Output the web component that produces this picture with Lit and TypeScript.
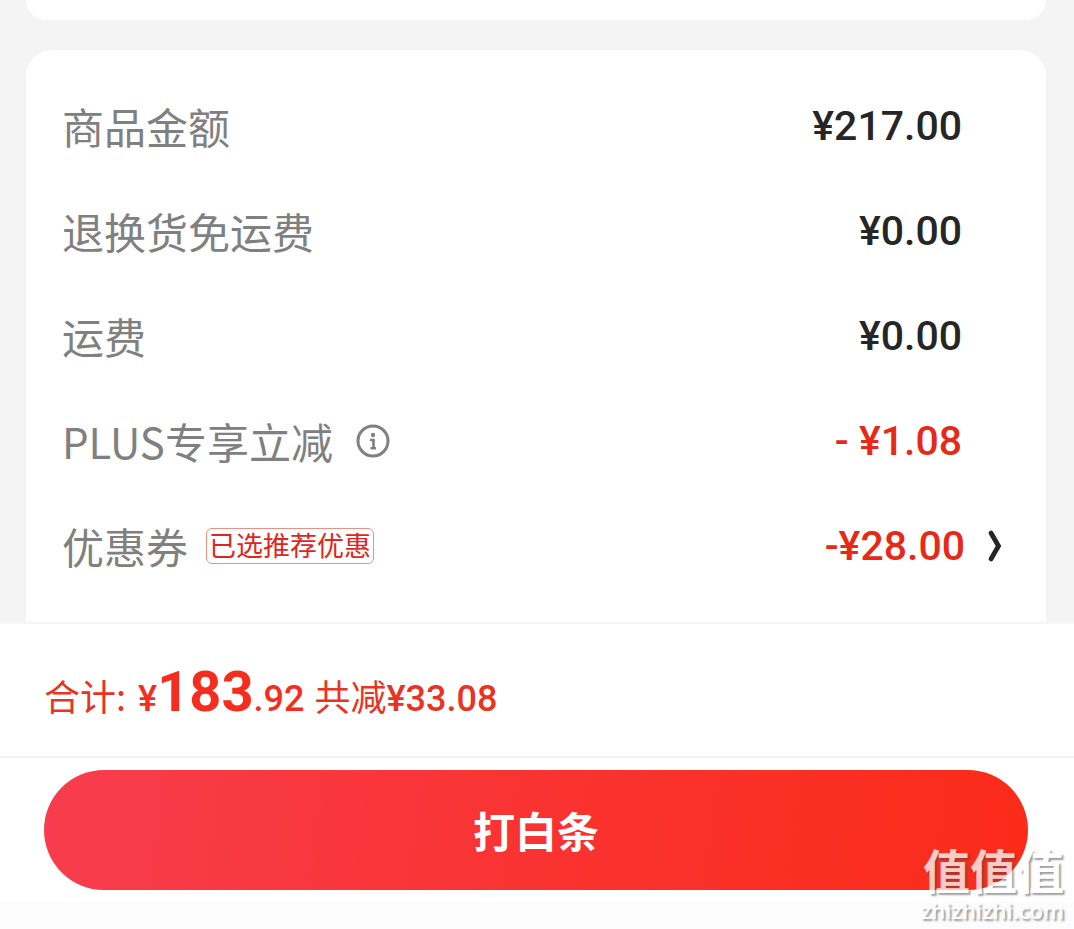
import { LitElement, html, css, nothing } from "lit";
import { customElement, property } from "lit/decorators.js";

interface FeeLine {
  label: string;
  value: string;
  discount?: boolean;
  info?: boolean;
  tag?: string;
  more?: boolean;
}

const LINES: FeeLine[] = [
  { label: "商品金额", value: "¥217.00" },
  { label: "退换货免运费", value: "¥0.00" },
  { label: "运费", value: "¥0.00" },
  { label: "PLUS专享立减", value: "- ¥1.08", discount: true, info: true },
  { label: "优惠券", value: "-¥28.00", discount: true, tag: "已选推荐优惠", more: true },
];

@customElement("fee-row")
export class FeeRow extends LitElement {
  @property({ attribute: false }) line!: FeeLine;

  static styles = css`
    :host {
      display: flex;
      align-items: center;
      height: 105px;
      padding: 0 40px 0 36px;
    }
    .label {
      color: #808080;
      font-size: 42px;
      line-height: 60px;
      white-space: nowrap;
    }
    .icon {
      display: flex;
      padding: 0;
      border: 0;
      background: none;
      cursor: pointer;
    }
    .info {
      margin-left: 22px;
    }
    .tag {
      box-sizing: border-box;
      height: 36px;
      margin-left: 18px;
      padding: 0 2px;
      border: 1px solid #ec8f86;
      border-radius: 6px;
      color: #e1251b;
      font-size: 27px;
      line-height: 32px;
      white-space: nowrap;
    }
    .value {
      margin-left: auto;
      color: #262626;
      font-family: Roboto, "Noto Sans CJK SC", sans-serif;
      font-size: 41px;
      font-weight: 500;
      line-height: 48px;
      white-space: nowrap;
    }
    .discount {
      color: #e62a17;
    }
    .end {
      display: flex;
      justify-content: flex-end;
      width: 44px;
    }
    .end.more {
      width: 41px;
    }
  `;

  render() {
    const { label, value, discount, info, tag, more } = this.line;
    return html`
      <span class="label">${label}</span>
      ${info
        ? html`<button class="icon info" aria-label="说明">
            <svg width="36" height="36" viewBox="0 0 36 36" fill="none" stroke="#808080">
              <circle cx="18" cy="18" r="15" stroke-width="3" />
              <circle cx="18" cy="12" r="2.2" fill="#808080" stroke="none" />
              <path d="M15 17H18.5V25M15.5 25.2H21" stroke-width="2.6" />
            </svg>
          </button>`
        : nothing}
      ${tag ? html`<span class="tag">${tag}</span>` : nothing}
      <span class="value ${discount ? "discount" : ""}">${value}</span>
      <span class="end ${more ? "more" : ""}">
        ${more
          ? html`<button class="icon" aria-label="选择优惠券">
              <svg width="20" height="36" viewBox="0 0 20 36" fill="none" stroke="#262626" stroke-width="4.8">
                <path d="M5 5L12.5 18L5 31" stroke-linecap="round" stroke-linejoin="miter" />
              </svg>
            </button>`
          : nothing}
      </span>
    `;
  }
}

@customElement("app-root")
export class AppRoot extends LitElement {
  static styles = css`
    :host {
      position: relative;
      display: flex;
      flex-direction: column;
      min-height: 100vh;
      overflow: hidden;
      background: #f4f4f4;
      font-family: "Noto Sans CJK SC", sans-serif;
    }
    .list {
      display: flex;
      flex-direction: column;
      gap: 30px;
      padding: 0 28px 0 26px;
    }
    .card {
      background: #fff;
      border-radius: 26px;
    }
    .previous {
      height: 20px;
      border-radius: 0 0 26px 26px;
    }
    .fees {
      padding: 23px 0 24px;
      border-radius: 26px 26px 0 0;
    }
    .footer {
      display: flex;
      flex: 1;
      flex-direction: column;
      border-top: 2px solid #f6f6f6;
      background: #fff;
    }
    .total {
      display: flex;
      align-items: baseline;
      height: 128px;
      padding: 4px 44px 0;
      border-bottom: 2px solid #f4f4f4;
      color: #e93323;
      font-size: 36px;
      line-height: 128px;
      white-space: nowrap;
    }
    .num {
      font-family: Roboto, "Noto Sans CJK SC", sans-serif;
      font-weight: 500;
    }
    .sum {
      margin: 0 10px 0 12px;
      color: #f52d1e;
    }
    .big {
      font-size: 56px;
      font-weight: 700;
    }
    .action {
      padding: 12px 46px 12px 44px;
    }
    .pay {
      display: block;
      width: 100%;
      height: 120px;
      padding: 0;
      border: 0;
      border-radius: 60px;
      background: linear-gradient(98deg, #f73d4e, #f93434 45%, #fb2b18);
      color: #fff;
      font-family: inherit;
      font-size: 42px;
      font-weight: 700;
      line-height: 60px;
      cursor: pointer;
    }
    .safe {
      flex: 1;
      background: #fcfcfc;
    }
    .mark {
      position: absolute;
      right: 10px;
      bottom: 6px;
      display: flex;
      flex-direction: column;
      align-items: flex-end;
      color: #fff;
      opacity: 0.75;
      text-shadow: 2px 2px 2px rgba(70, 70, 70, 0.7);
      pointer-events: none;
    }
    .name {
      font-family: "Liberation Sans", "Noto Sans CJK SC", sans-serif;
      font-size: 47px;
      font-weight: 700;
      line-height: 48px;
    }
    .site {
      font-family: "Open Sans", sans-serif;
      font-size: 22px;
      font-weight: 600;
      line-height: 26px;
    }
  `;

  render() {
    return html`
      <div class="list">
        <div class="card previous"></div>
        <section class="card fees">
          ${LINES.map((line) => html`<fee-row .line=${line}></fee-row>`)}
        </section>
      </div>
      <div class="footer">
        <div class="total">
          <span>合计:</span>
          <span class="num sum">¥<span class="big">183</span>.92</span>
          <span>共减<span class="num">¥33.08</span></span>
        </div>
        <div class="action"><button class="pay">打白条</button></div>
        <div class="safe"></div>
      </div>
      <div class="mark">
        <span class="name">值值值</span>
        <span class="site">zhizhizhi.com</span>
      </div>
    `;
  }
}
